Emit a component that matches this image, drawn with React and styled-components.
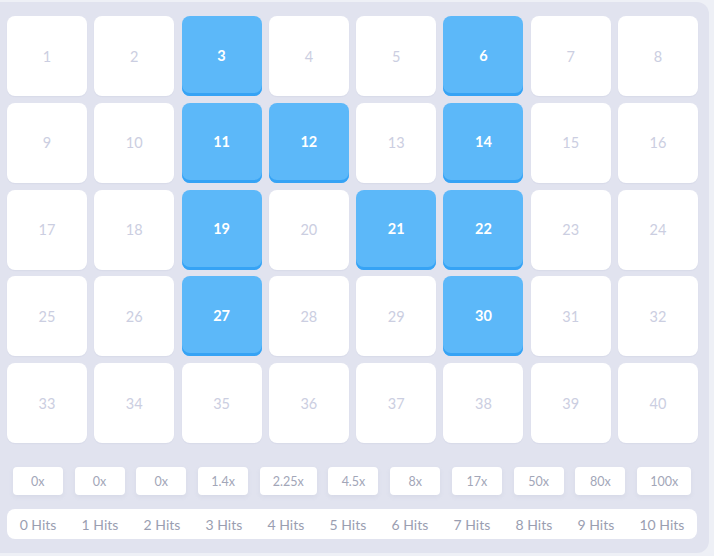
import React from "react";
import styled, { createGlobalStyle } from "styled-components";

const Global = createGlobalStyle`
  html, body { margin: 0; padding: 0; background: #eef0f6; }
  body { font-family: "Lato", "Open Sans", sans-serif; }
  * { box-sizing: border-box; }
`;

const Board = styled.div`
  width: 709px;
  height: 551px;
  margin-top: 2px;
  background: #e1e3ef;
  border-radius: 0 12px 12px 0;
  padding: 14px 11px 14px 7px;
  display: flex;
  flex-direction: column;
`;

const Grid = styled.div`
  display: grid;
  grid-template-columns: repeat(8, 1fr);
  grid-auto-rows: 80px;
  column-gap: 7.3px;
  row-gap: 6.8px;
`;

const Cell = styled.div`
  display: flex;
  align-items: center;
  justify-content: center;
  border-radius: 8px;
  font-size: 14.5px;
  background: ${(p) => (p.$picked ? "#5cb8f9" : "#ffffff")};
  color: ${(p) => (p.$picked ? "#ffffff" : "#cbcee1")};
  font-weight: ${(p) => (p.$picked ? 700 : 400)};
  box-shadow: ${(p) =>
    p.$picked ? "inset 0 -3px 0 #36a3f5" : "0 1px 1px rgba(150,155,190,0.12)"};
  padding-bottom: ${(p) => (p.$picked ? "2px" : "0")};
`;

const Row = styled.div`
  display: flex;
  align-items: center;
  justify-content: space-around;
  width: 690px;
`;

const Payouts = styled(Row)`
  margin-top: 24px;
  height: 28px;
`;

const Payout = styled.div`
  min-width: 50px;
  height: 28px;
  padding: 0 13px;
  display: flex;
  align-items: center;
  justify-content: center;
  background: #fff;
  border-radius: 4px;
  font-size: 12.5px;
  color: #a2a6b8;
  box-shadow: 0 2px 4px rgba(140, 146, 180, 0.12);
`;

const HitsBar = styled(Row)`
  margin-top: 14px;
  height: 30px;
  background: #fff;
  border-radius: 8px;
`;

const Hit = styled.span`
  font-size: 14px;
  color: #9a9eb1;
  white-space: nowrap;
`;

const picked = new Set([3, 6, 11, 12, 14, 19, 21, 22, 27, 30]);
const payouts = ["0x", "0x", "0x", "1.4x", "2.25x", "4.5x", "8x", "17x", "50x", "80x", "100x"];

export default function App() {
  return (
    <>
      <Global />
      <Board>
        <Grid>
          {Array.from({ length: 40 }, (_, i) => i + 1).map((n) => (
            <Cell key={n} $picked={picked.has(n)}>
              {n}
            </Cell>
          ))}
        </Grid>
        <Payouts>
          {payouts.map((p, i) => (
            <Payout key={i}>{p}</Payout>
          ))}
        </Payouts>
        <HitsBar>
          {payouts.map((_, i) => (
            <Hit key={i}>{i} Hits</Hit>
          ))}
        </HitsBar>
      </Board>
    </>
  );
}
